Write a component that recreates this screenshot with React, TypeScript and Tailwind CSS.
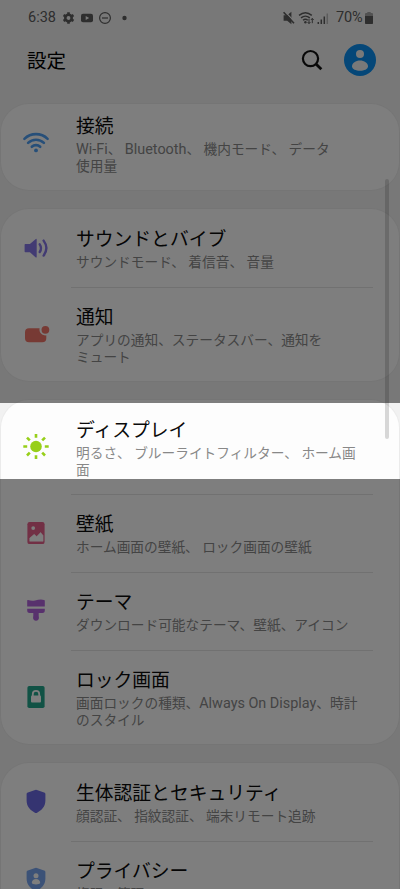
import type { ReactNode } from "react"

type Item = {
  title: string
  lines: string[]
  icon: ReactNode
}

function Icon({ children }: { children: ReactNode }) {
  return (
    <svg width="28" height="28" viewBox="0 0 28 28" fill="none" className="block shrink-0">
      {children}
    </svg>
  )
}

const wifi = (
  <Icon>
    <g stroke="#4f9ff2" strokeWidth="2.6" strokeLinecap="round">
      <path d="M2.4 9.9a16.6 16.6 0 0 1 23.2 0" />
      <path d="M6.1 13.9a11.3 11.3 0 0 1 15.8 0" />
      <path d="M9.8 17.8a6 6 0 0 1 8.4 0" />
    </g>
    <circle cx="14" cy="21.4" r="1.9" fill="#4f9ff2" />
  </Icon>
)

const sound = (
  <Icon>
    <path d="M2.600 10.800q0-.7.7-.7h4.600l5.600-4.900q1.200-.9 1.200.5v17q0 1.400-1.200.5l-5.600-4.900H3.300q-.7 0-.7-.7z" fill="#8577e6" />
    <g stroke="#8577e6" strokeWidth="2.400" strokeLinecap="round">
      <path d="M17.700 10.300q2.600 3.900 0 7.700" />
      <path d="M21.600 6.600q5.600 7.500 0 15" />
    </g>
  </Icon>
)

const notification = (
  <Icon>
    <path
      d="M7 8.300h10.600a5.800 5.800 0 0 0 6.700 7v3a4 4 0 0 1-4 4H7a4 4 0 0 1-4-4v-6a4 4 0 0 1 4-4z"
      fill="#ee7568"
    />
    <circle cx="23.400" cy="9.800" r="3.900" fill="#ee7568" />
  </Icon>
)

const sun = (
  <Icon>
    <circle cx="14" cy="13.500" r="5.800" fill="#97cf19" />
    <g stroke="#97cf19" strokeWidth="2.600">
      <path d="M14 .9v3.800M14 22.300v3.800M1.300 13.500h3.900M22.800 13.500h3.900M5 4.600l2.800 2.800M20.200 19.700l2.800 2.800M5 22.500l2.800-2.800M20.200 7.400L23 4.600" />
    </g>
  </Icon>
)

const wallpaper = (
  <Icon>
    <rect x="5.400" y="3.100" width="17.200" height="22" rx="2.200" fill="#e4608a" />
    <circle cx="11.200" cy="9.100" r="1.900" fill="#fcfcfc" />
    <path d="M7.700 22.300v-3.200l4.500-3.800 2.500 2.200 3.900-4.100 2.500 3.100v5.800z" fill="#fcfcfc" stroke="#fcfcfc" strokeWidth=".5" strokeLinejoin="round" />
  </Icon>
)

const brush = (
  <Icon>
    <path d="M5.200 3.600q0-.9.900-.6 3.500 1.300 7 .4 5-1.300 9-.5.7.1.7.8v5.900H5.200z" fill="#b062da" />
    <path d="M5.200 11.700h17.600v1.800q0 2.500-2.500 2.500h-3.600v2.200q0 1.100.2 2a2.950 2.950 0 1 1-5.800 0q.2-.9.200-2V16H7.700q-2.500 0-2.500-2.500z" fill="#b062da" />
  </Icon>
)

const lock = (
  <Icon>
    <rect x="5.400" y="3" width="17.200" height="22" rx="1.800" fill="#22a58b" />
    <path d="M10.800 13v-2a3.200 3.200 0 0 1 6.400 0v2" stroke="#fcfcfc" strokeWidth="1.800" />
    <rect x="9" y="12.600" width="10" height="7" rx="1" fill="#fcfcfc" />
  </Icon>
)

const SHIELD =
  "M13.100 1.900q.9-.4 1.800 0l7.200 2.500q1.300.4 1.300 1.700v6.500c0 6.500-4.500 10.300-8.300 12.100q-1.100.5-2.200 0C9.100 22.900 4.600 19.100 4.600 12.600V6.100q0-1.300 1.300-1.700z"

const shield = (
  <Icon>
    <path d={SHIELD} fill="#6a68e2" />
  </Icon>
)

const privacy = (
  <Icon>
    <path d={SHIELD} fill="#78a5ee" />
    <circle cx="14" cy="9.700" r="2.500" fill="#fcfcfc" />
    <path d="M9.800 16.800c0-2.300 2-3.700 4.200-3.700s4.200 1.400 4.200 3.700c0 2.100-8.400 2.100-8.400 0z" fill="#fcfcfc" />
  </Icon>
)

const groups: Item[][] = [
  [{ title: "接続", lines: ["Wi-Fi、 Bluetooth、 機内モード、 データ", "使用量"], icon: wifi }],
  [
    { title: "サウンドとバイブ", lines: ["サウンドモード、 着信音、 音量"], icon: sound },
    { title: "通知", lines: ["アプリの通知、ステータスバー、通知を", "ミュート"], icon: notification },
  ],
  [
    { title: "ディスプレイ", lines: ["明るさ、 ブルーライトフィルター、 ホーム画", "面"], icon: sun },
    { title: "壁紙", lines: ["ホーム画面の壁紙、 ロック画面の壁紙"], icon: wallpaper },
    { title: "テーマ", lines: ["ダウンロード可能なテーマ、壁紙、アイコン"], icon: brush },
    { title: "ロック画面", lines: ["画面ロックの種類、Always On Display、時計", "のスタイル"], icon: lock },
  ],
  [
    { title: "生体認証とセキュリティ", lines: ["顔認証、 指紋認証、 端末リモート追跡"], icon: shield },
    { title: "プライバシー", lines: ["権限の管理"], icon: privacy },
  ],
]

function StatusBar() {
  return (
    <div className="flex h-9 items-center pl-7 pr-[27px] text-[14.500px] leading-none text-[#5c5c5c]">
      <span className="w-[35px] pt-px">6:38</span>
      <svg width="66" height="14" viewBox="0 0 66 14" fill="none">
        <circle cx="5.500" cy="7" r="3.200" stroke="#5c5c5c" strokeWidth="2.600" />
        <path d="M5.500 1.200v2M5.500 10.800v2M.5 4.100l1.700 1M8.800 8.900l1.700 1M.5 9.900l1.700-1M8.800 5.100l1.700-1" stroke="#5c5c5c" strokeWidth="2.600" />
        <rect x="18" y="2.700" width="12" height="8.600" rx="2" fill="#5c5c5c" />
        <path d="M22.700 5v4l3.500-2z" fill="#f3f3f3" />
        <circle cx="42" cy="7" r="5.400" stroke="#5c5c5c" strokeWidth="1.200" />
        <path d="M39 7h6" stroke="#5c5c5c" strokeWidth="1.200" />
        <circle cx="61.500" cy="7" r="2.200" fill="#5c5c5c" />
      </svg>
      <svg width="46" height="14" viewBox="0 0 46 14" fill="none" className="ml-auto">
        <path d="M.6 4.200h3.600L8.400.8v12.400L4.200 9.800H.6z" fill="#5c5c5c" />
        <path d="M1.600.2l10.200 10.800" stroke="#f3f3f3" strokeWidth="1.200" />
        <path d="M.6 1.200l10.400 11" stroke="#5c5c5c" strokeWidth="1.600" />
        <g stroke="#5c5c5c" strokeWidth="1.400">
          <path d="M16 4.400q6.400-5.400 12.800 0" />
          <path d="M18 6.900q4.400-3.600 8.800 0" />
          <path d="M20 9.200q2.400-2 4.800 0" />
          <path d="M26 7.800v4.800M24.600 11l1.400 1.600 1.400-1.600M29.300 12.200V7.400M27.900 9l1.400-1.600L30.700 9" strokeWidth="1" />
        </g>
        <circle cx="22.400" cy="11.200" r="1.200" fill="#5c5c5c" />
        <path d="M35.300 11v2M38.300 8.500V13M41.300 5.500V13" stroke="#5c5c5c" strokeWidth="1.500" />
        <path d="M44.300 2.500V13" stroke="#b8b8b8" strokeWidth="1.500" />
      </svg>
      <span className="ml-[7px] w-[29px] pt-px tracking-[-0.200px]">70%</span>
      <svg width="8" height="14" viewBox="0 0 8 14">
        <path d="M2.300 1h3.400v1.500H2.300z" fill="#a5a5a5" />
        <rect y="2" width="8" height="11" rx="1" fill="#a5a5a5" />
        <path d="M0 5h8v7q0 1-1 1H1q-1 0-1-1z" fill="#5c5c5c" />
      </svg>
    </div>
  )
}

function Header() {
  return (
    <header className="flex h-12 items-center pl-[27px] pr-6">
      <h1 className="flex-1 pt-[3px] text-[19.500px] leading-none text-black">設定</h1>
      <svg width="22" height="22" viewBox="0 0 22 22" fill="none" stroke="#111111" className="mr-[21px]">
        <circle cx="9.500" cy="9.600" r="7.600" strokeWidth="2.200" />
        <path d="M15 15l5.300 5.300" strokeWidth="2.800" />
      </svg>
      <svg width="32" height="32" viewBox="0 0 32 32">
        <circle cx="16" cy="16" r="16" fill="#0a8ff0" />
        <circle cx="16" cy="10" r="4" fill="#f3f3f3" />
        <path d="M8 22.300c0-3.300 3.800-5.800 8-5.800s8 2.500 8 5.800c0 6-16 6-16 0z" fill="#f3f3f3" />
      </svg>
    </header>
  )
}

// Latin words are set a little larger than the kana around them
function Summary({ text }: { text: string }) {
  return (
    <p className="h-[17px] whitespace-nowrap text-[13.700px] leading-[17px] text-[#888888]">
      {text.split(/([A-Za-z][A-Za-z -]*[A-Za-z])/).map((part, i) =>
        i % 2 ? (
          <span key={i} className="text-[14.400px]">
            {part}
          </span>
        ) : (
          part
        )
      )}
    </p>
  )
}

function Row({ item, divided }: { item: Item; divided: boolean }) {
  return (
    <li className={item.lines.length > 1 ? "flex h-[94px] shrink-0" : "flex h-[78px] shrink-0"}>
      <div className="flex w-[70px] shrink-0 items-center pl-[20.500px]">{item.icon}</div>
      <div className={divided ? "mr-[26px] flex-1 border-t border-[#e2e2e2] pl-[5px] pt-[17px]" : "mr-[26px] flex-1 pl-[5px] pt-[18px]"}>
        <h2 className="h-[27px] whitespace-nowrap text-[18.800px] leading-[27px] text-[#0a0a0a]">{item.title}</h2>
        {item.lines.map((line) => (
          <Summary key={line} text={line} />
        ))}
      </div>
    </li>
  )
}

export default function App() {
  return (
    <div
      lang="ja"
      className="relative h-[889px] w-[400px] overflow-hidden bg-[#f1f1f1] font-['Roboto','Noto_Sans_CJK_JP',sans-serif]"
    >
      <StatusBar />
      <Header />
      <main className="flex flex-col gap-[19px] px-px pt-5">
        {groups.map((items, i) => (
          <ul
            key={items[0].title}
            className={
              i === 0
                ? "flex h-[86px] flex-col justify-end overflow-hidden rounded-[28px] bg-[#fdfdfd] shadow-[0_0_0_1px_#ebebeb]"
                : "shrink-0 rounded-[28px] bg-[#fdfdfd] shadow-[0_0_0_1px_#ebebeb]"
            }
          >
            {items.map((item, j) => (
              <Row key={item.title} item={item} divided={j > 0} />
            ))}
          </ul>
        ))}
      </main>

      {/* scroll indicator */}
      <div className="absolute left-[385px] top-[179px] h-[260px] w-1 rounded-full bg-black/15" />

      {/* dimming around the highlighted row */}
      <div className="absolute inset-x-0 top-0 h-[403px] bg-black/50" />
      <div className="absolute inset-x-0 bottom-0 top-[479px] bg-black/50" />
    </div>
  )
}
